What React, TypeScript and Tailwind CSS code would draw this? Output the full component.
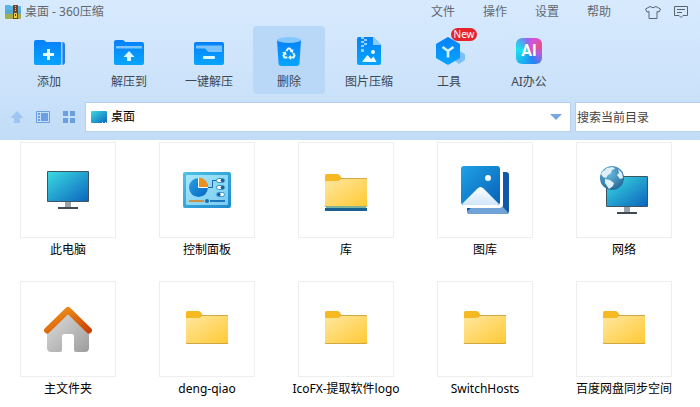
import type { ReactNode } from 'react';

const AddIcon = () => (
  <svg className="w-8 h-8 overflow-visible" viewBox="0 0 32 32">
    <path d="M20 6h9a3 3 0 0 1 3 3v17a3 3 0 0 1-3 3h-9z" fill="#2a7de0" />
    <path d="M28 6h1.500v23H27z" fill="#8fd0ff" />
    <path d="M1 6a2 2 0 0 1 2-2h7.500a2 2 0 0 1 1.500.700L13.300 6H26a2 2 0 0 1 2 2v19a2 2 0 0 1-2 2H3a2 2 0 0 1-2-2z" fill="url(#blue)" />
    <path d="M15.500 13v11M10 18.500h11" stroke="#e3fbff" strokeWidth="3" />
  </svg>
);

const ExtractIcon = () => (
  <svg className="w-8 h-8" viewBox="0 0 32 32">
    <path d="M1 6a2 2 0 0 1 2-2h6.500a2 2 0 0 1 1.500.700L12.400 6H29a2 2 0 0 1 2 2v19a2 2 0 0 1-2 2H3a2 2 0 0 1-2-2z" fill="url(#blue)" />
    <path d="M3 12.500V11a1 1 0 0 1 1-1h24a1 1 0 0 1 1 1v1.500z" fill="#7cc5ff" />
    <path d="m16 15 5.500 6H18v4h-4v-4h-3.500z" fill="#dcf8ff" />
  </svg>
);

const OneClickIcon = () => (
  <svg className="w-8 h-8" viewBox="0 0 32 32">
    <rect x="1" y="6" width="30" height="23" rx="2" fill="url(#blue)" />
    <path d="M3 9.500h26V16H16.500a3 3 0 0 1-2.200-1L12 12.500H3z" fill="#78c2ff" />
    <rect x="10" y="20" width="12" height="3" rx="1" fill="#dcf8ff" />
  </svg>
);

const TrashIcon = () => (
  <svg className="w-8 h-8" viewBox="0 0 32 32">
    <path d="M4 4h24l-1.500 23a3 3 0 0 1-3 3h-15a3 3 0 0 1-3-3z" fill="url(#blue)" />
    <ellipse cx="16" cy="4" rx="12" ry="3" fill="#82c8ff" />
    <g fill="none" stroke="#e3fbff" strokeWidth="2" strokeLinejoin="round">
      <path d="m13.400 15 1.700-2.500h1.800l1.800 2.800" />
      <path d="m20.200 17 1.300 2.500-1 2h-3.300" />
      <path d="M14.400 21.500h-2.900l-1-2 1.300-2.500" />
    </g>
    <path d="m20.500 13-.600 4-3.300-1.500zM18 19v5l-3-2.500zM9 16.600l3.800-1 .800 3.700z" fill="#e3fbff" />
  </svg>
);

const PictureIcon = () => (
  <svg className="w-8 h-8" viewBox="0 0 32 32">
    <path d="M4 3a2 2 0 0 1 2-2h14l8 8v18a2 2 0 0 1-2 2H6a2 2 0 0 1-2-2z" fill="url(#blue)" />
    <path d="M20 1l8 8h-8z" fill="#8accff" />
    <path d="M8 1h3v2H8zM11 3h3v2h-3zM8 5h3v2H8zM11 7h3v2h-3zM8 9h3v2H8zM8 13h3v3H8z" fill="#8fd2ff" />
    <circle cx="20" cy="16" r="2" fill="#e3fbff" />
    <path d="m9 26 5.500-7 3.500 4 2.500-2.500 3 5.500z" fill="#e9fcff" />
  </svg>
);

const ToolsIcon = () => (
  <svg className="w-8 h-8" viewBox="0 0 32 32">
    <path d="m26 15 6 3v6l-6 4-5-4z" fill="#7dbff9" />
    <path d="M15 1 26.300 7.400a1.500 1.500 0 0 1 .700 1.200v12.800a1.500 1.500 0 0 1-.700 1.200L15 29 3.700 22.600a1.500 1.500 0 0 1-.700-1.200V8.600a1.500 1.500 0 0 1 .700-1.200z" fill="url(#blue)" />
    <path d="m9.500 11 5.500 4 5.500-4M15 15v6.500" fill="none" stroke="#d6f4ff" strokeWidth="2.600" />
  </svg>
);

const AiIcon = () => (
  <span className="w-8 h-8 flex items-start justify-center pt-0.5">
    <span className="w-[26px] h-[26px] rounded-md bg-[conic-gradient(from_20deg,#d552dc,#e5508e_12%,#b35ce0_24%,#2484f5_38%,#18b9f0_55%,#1be4ec_72%,#4fa6f0_84%,#9b62ea_92%,#d552dc)] text-white font-bold text-base leading-[26px] text-center font-['Roboto','Liberation_Sans',sans-serif]">
      AI
    </span>
  </span>
);

const Monitor = () => (
  <>
    <path d="M21 36h6v5h-6z" fill="#9aa4ad" />
    <path d="M14 41h20v2H14z" fill="#414a52" />
    <rect x="3" y="5" width="42" height="31" rx="1" fill="#3e5561" />
    <rect x="4" y="6" width="40" height="29" fill="url(#screen)" />
  </>
);

const ComputerIcon = () => (
  <svg className="w-12 h-12" viewBox="0 0 48 48">
    <Monitor />
  </svg>
);

const ControlPanelIcon = () => (
  <svg className="w-12 h-12" viewBox="0 0 48 48">
    <rect x="0" y="6" width="48" height="36" rx="2" fill="url(#panel)" />
    <rect x="3" y="9" width="42" height="30" rx="1" fill="url(#panelInner)" />
    <circle cx="15.500" cy="21.500" r="9.500" fill="url(#screenDeep)" />
    <path d="M16 11.500a9.500 9.500 0 0 1 9 9.500h-9z" fill="#ed911c" />
    <path d="M15.500 11.500v10H25" fill="none" stroke="#f4fbff" />
    <path d="M25 21.500h4.500v-7H34" fill="none" stroke="#1565a8" />
    <g>
      <rect x="33.500" y="12.500" width="8" height="4" rx="2" fill="#fff" stroke="#2f95cf" />
      <rect x="33.500" y="19.500" width="8" height="4" rx="2" fill="#fff" stroke="#2f95cf" />
      <rect x="33.500" y="26.500" width="8" height="4" rx="2" fill="#fff" stroke="#2f95cf" />
      <circle cx="39.500" cy="14.500" r="1.800" fill="#115d9c" />
      <circle cx="39.500" cy="21.500" r="1.800" fill="#115d9c" />
      <circle cx="35.800" cy="28.500" r="1.800" fill="#115d9c" />
    </g>
    <path d="M6 35h15" stroke="#c99247" strokeWidth="2" />
    <path d="M27 35h15" stroke="#1777bd" strokeWidth="2" />
    <circle cx="24" cy="35" r="2" fill="#176bb0" />
  </svg>
);

const FolderShape = () => (
  <>
    <path d="M3 7.500A1.500 1.500 0 0 1 4.500 6h11q1.500 0 2.500 1.500l1.500 2.500H44a1 1 0 0 1 1 1v4H3z" fill="#f7b921" />
    <path d="M19 10h25a1 1 0 0 1 1 1v2H16z" fill="#d3a847" />
    <path d="M3 14q0-1 1-1h11q1.500 0 2.700-1l1.300-1h25q1 0 1 1v26q0 1-1 1H4q-1 0-1-1z" fill="url(#folder)" />
    <path d="M3 37.500q0 1 1 1h40q1 0 1-1" fill="none" stroke="#cfa744" />
  </>
);

const FolderIcon = () => (
  <svg className="w-12 h-12" viewBox="0 0 48 48">
    <FolderShape />
  </svg>
);

const LibraryIcon = () => (
  <svg className="w-12 h-12" viewBox="0 0 48 48">
    <g transform="translate(0 2)">
      <FolderShape />
    </g>
    <path d="M4 40h40v2H4z" fill="#80b39b" />
    <path d="M3 42h42v3H3z" fill="#17608f" />
  </svg>
);

const GalleryIcon = () => (
  <svg className="w-12 h-12" viewBox="0 0 48 48">
    <path d="M42 6h3a3 3 0 0 1 3 3v36a3 3 0 0 1-3 3H9a3 3 0 0 1-3-3v-3h33a3 3 0 0 0 3-3z" fill="#1159a8" />
    <path d="M6 45q2-1 4-3h29q2 0 3-1l5 5.500q-1 1.500-2 1.500H9q-3 0-3-3z" fill="#70a2d8" />
    <rect width="39" height="39" rx="3" fill="url(#gallery)" />
    <path d="M1 38 16.500 22.500q3-3 6 0L38 38q-1 1-2 1H3q-1 0-2-1z" fill="url(#hill)" />
    <circle cx="27" cy="12" r="3" fill="#f1faff" />
  </svg>
);

const NetworkIcon = () => (
  <svg className="w-12 h-12 overflow-visible" viewBox="0 0 48 48">
    <g transform="translate(3 5)">
      <Monitor />
    </g>
    <circle cx="12" cy="12" r="12" fill="url(#globe)" />
    <path d="m2 6 5-4 6-1 2 2-3 1-1 3-3 2-2 3-3-1-2-3zM5 13l5 1 4 3-1 3-4 3-2-3-2-3zM18 3l4 4 1 5-3 1-3-4 2-2z" fill="#dff0f8" />
  </svg>
);

const HomeIcon = () => (
  <svg className="w-12 h-12" viewBox="0 0 48 48">
    <path d="M24 7 45 28v15a4 4 0 0 1-4 4h-9a2 2 0 0 1-2-2V31a2 2 0 0 0-2-2h-8a2 2 0 0 0-2 2v14a2 2 0 0 1-2 2H7a4 4 0 0 1-4-4V28z" fill="url(#wall)" />
    <path d="M3 25.500 24 5l21 20.500" fill="none" stroke="url(#roof)" strokeWidth="6" strokeLinecap="round" strokeLinejoin="round" />
  </svg>
);

// Gradients shared by all the icons
const Gradients = () => (
  <svg className="absolute w-0 h-0" aria-hidden="true">
    <defs>
      <linearGradient id="blue" x1="0" y1="0" x2="0" y2="1">
        <stop stopColor="#0780f9" />
        <stop offset="1" stopColor="#06a5ff" />
      </linearGradient>
      <linearGradient id="screen" x1="0" y1="0" x2="1" y2="1">
        <stop stopColor="#3adbe2" />
        <stop offset="1" stopColor="#0c65bd" />
      </linearGradient>
      <linearGradient id="screenDeep" x1="0" y1="0" x2="1" y2="1">
        <stop stopColor="#2a9de0" />
        <stop offset="1" stopColor="#0868c4" />
      </linearGradient>
      <linearGradient id="panel" x1="0" y1="0" x2="1" y2="1">
        <stop stopColor="#4fc3e6" />
        <stop offset="1" stopColor="#1c88cd" />
      </linearGradient>
      <linearGradient id="panelInner" x1="0" y1="0" x2="1" y2="1">
        <stop stopColor="#a5e7fb" />
        <stop offset="1" stopColor="#79cbf1" />
      </linearGradient>
      <linearGradient id="folder" x1="0" y1="0" x2="1" y2="1">
        <stop stopColor="#ffe7a0" />
        <stop offset="1" stopColor="#ffc933" />
      </linearGradient>
      <linearGradient id="gallery" x1="0" y1="0" x2="1" y2="1">
        <stop stopColor="#1fa2e6" />
        <stop offset="1" stopColor="#0761b7" />
      </linearGradient>
      <linearGradient id="hill" x1="0" y1="0" x2="0" y2="1">
        <stop stopColor="#ffffff" />
        <stop offset="1" stopColor="#cfe6fb" />
      </linearGradient>
      <radialGradient id="globe" cx="0.4" cy="0.3" r="0.7">
        <stop stopColor="#6cbbe0" />
        <stop offset="1" stopColor="#256b9b" />
      </radialGradient>
      <linearGradient id="wall" x1="0" y1="0" x2="1" y2="1">
        <stop stopColor="#dedede" />
        <stop offset="1" stopColor="#9d9d9d" />
      </linearGradient>
      <linearGradient id="roof" x1="0" y1="0" x2="1" y2="1">
        <stop stopColor="#f29a1c" />
        <stop offset="1" stopColor="#cb4206" />
      </linearGradient>
    </defs>
  </svg>
);

type Tool = { label: string; icon: ReactNode; active?: boolean; badge?: string };

const tools: Tool[] = [
  { label: '添加', icon: <AddIcon /> },
  { label: '解压到', icon: <ExtractIcon /> },
  { label: '一键解压', icon: <OneClickIcon /> },
  { label: '删除', icon: <TrashIcon />, active: true },
  { label: '图片压缩', icon: <PictureIcon /> },
  { label: '工具', icon: <ToolsIcon />, badge: 'New' },
  { label: 'AI办公', icon: <AiIcon /> },
];

const entries: { name: string; icon: ReactNode }[] = [
  { name: '此电脑', icon: <ComputerIcon /> },
  { name: '控制面板', icon: <ControlPanelIcon /> },
  { name: '库', icon: <LibraryIcon /> },
  { name: '图库', icon: <GalleryIcon /> },
  { name: '网络', icon: <NetworkIcon /> },
  { name: '主文件夹', icon: <HomeIcon /> },
  { name: 'deng-qiao', icon: <FolderIcon /> },
  { name: 'IcoFX-提取软件logo', icon: <FolderIcon /> },
  { name: 'SwitchHosts', icon: <FolderIcon /> },
  { name: '百度网盘同步空间', icon: <FolderIcon /> },
];

export default function App() {
  return (
    <div className="min-h-screen overflow-hidden bg-white text-xs text-black font-['Noto_Sans','Noto_Sans_CJK_SC',sans-serif]">
      <Gradients />
      <header className="bg-linear-to-b from-[#d7eafe] via-[#cee4fb] to-[#c2dcf7] pb-2">
        {/* Title bar */}
        <div className="flex items-center h-6 pl-[5px] pr-[11px] text-[#62686f]">
          <svg className="w-4 h-4 mr-1" viewBox="0 0 16 16">
            <path d="M0 2q0-1 1-1h4l1 1h9q1 0 1 1v5H0z" fill="#58b4e2" />
            <path d="M0 6h16v6H0z" fill="#56a9d0" />
            <path d="M0 10h16v4q0 1-1 1H1q-1 0-1-1z" fill="#a3ad4c" />
            <path d="M8 1h5v14H8z" fill="#7a3f20" />
            <path d="M10 2h1v1h-1zM10 4h1v1h-1zM10 6h1v1h-1zM9 9h3v5H9z" fill="#f4cc4b" />
            <path d="M10 10h1v2h-1z" fill="#5d3013" />
          </svg>
          <h1 className="flex-1">桌面 - 360压缩</h1>
          <nav className="flex items-center gap-7 mr-[34px]">
            <button>文件</button>
            <button>操作</button>
            <button>设置</button>
            <button>帮助</button>
          </nav>
          <button aria-label="皮肤" className="mr-3">
            <svg className="w-4 h-4" viewBox="0 0 16 16" fill="none" stroke="#5b6570">
              <path d="M5 2.500Q8 5 11 2.500l4.500 2.500-1.500 3-2-.500v7H4v-7l-2 .500L.500 5z" />
            </svg>
          </button>
          <button aria-label="反馈">
            <svg className="w-4 h-4" viewBox="0 0 16 16" fill="none" stroke="#5b6570">
              <path d="M1.500 2.500h13v9H10l-2 2-2-2H1.500zM4 5.500h8M4 8.500h5" />
            </svg>
          </button>
        </div>

        {/* Toolbar */}
        <div className="flex gap-2 pl-[13px] pt-0.5 text-[#404750]">
          {tools.map((tool) => (
            <button
              key={tool.label}
              className={`relative flex flex-col items-center w-[72px] h-[68px] pt-2.5 rounded ${tool.active ? 'bg-[#b9d8f7]' : ''}`}
            >
              {tool.icon}
              <span className="mt-[5px] leading-[18px]">{tool.label}</span>
              {tool.badge && (
                <span className="absolute left-[38px] top-0.5 w-[26px] h-[13px] rounded-full bg-[#e5232d] text-white text-[10px] leading-[13px] text-center">
                  {tool.badge}
                </span>
              )}
            </button>
          ))}
        </div>

        {/* Address bar */}
        <div className="flex items-center mt-2">
          <div className="flex items-center gap-2.5 w-[85px] pl-[9px]">
            <button aria-label="上一级">
              <svg className="w-4 h-4" viewBox="0 0 16 16">
                <path d="m8 2 6.500 7H11v5H5V9H1.500z" fill="#9fc5f3" />
              </svg>
            </button>
            <button aria-label="列表视图">
              <svg className="w-4 h-4" viewBox="0 0 16 16">
                <path d="M1.500 2.500h13v11h-13z" fill="none" stroke="#6a9fe4" />
                <path d="M3 4h2v2H3zM3 7h2v2H3zM3 10h2v2H3zM6 4h7v8H6z" fill="#6a9fe4" />
              </svg>
            </button>
            <button aria-label="图标视图">
              <svg className="w-4 h-4" viewBox="0 0 16 16">
                <path d="M2 2h5v5H2zM9 2h5v5H9zM2 9h5v5H2zM9 9h5v5H9z" fill="#6a9fe4" />
              </svg>
            </button>
          </div>
          <div className="flex items-center flex-1 h-[30px] pl-1 pr-2 mr-1 bg-white border border-[#b5d1ec]">
            <svg className="w-[18px] h-4" viewBox="0 0 18 16">
              <path d="M1 3q0-1 1-1h14q1 0 1 1v10q0 1-1 1H2q-1 0-1-1z" fill="url(#screen)" />
              <path d="M12 13h1v1h-1zM15 13h1v1h-1z" fill="#d8eefc" />
            </svg>
            <input aria-label="地址" defaultValue="桌面" className="flex-1 min-w-0 ml-[3px] outline-none" />
            <button aria-label="展开地址">
              <svg className="w-3 h-3" viewBox="0 0 12 12">
                <path d="M0 3h12L6 9z" fill="#7ba6e4" />
              </svg>
            </button>
          </div>
          <input
            type="search"
            aria-label="搜索"
            placeholder="搜索当前目录"
            className="w-[125px] h-[30px] pl-px bg-white border border-r-0 border-[#b5d1ec] outline-none placeholder:text-[#444]"
          />
        </div>
      </header>

      {/* Files */}
      <main className="flex flex-wrap gap-x-[43px] gap-y-[22px] pl-5 pt-0.5">
        {entries.map((entry) => (
          <a key={entry.name} href="#" className="w-24">
            <div className="flex items-center justify-center h-24 border border-[#eeeeee]">{entry.icon}</div>
            <div className="-mx-5 mt-[3px] text-center leading-[18px] whitespace-nowrap">{entry.name}</div>
          </a>
        ))}
      </main>
    </div>
  );
}
